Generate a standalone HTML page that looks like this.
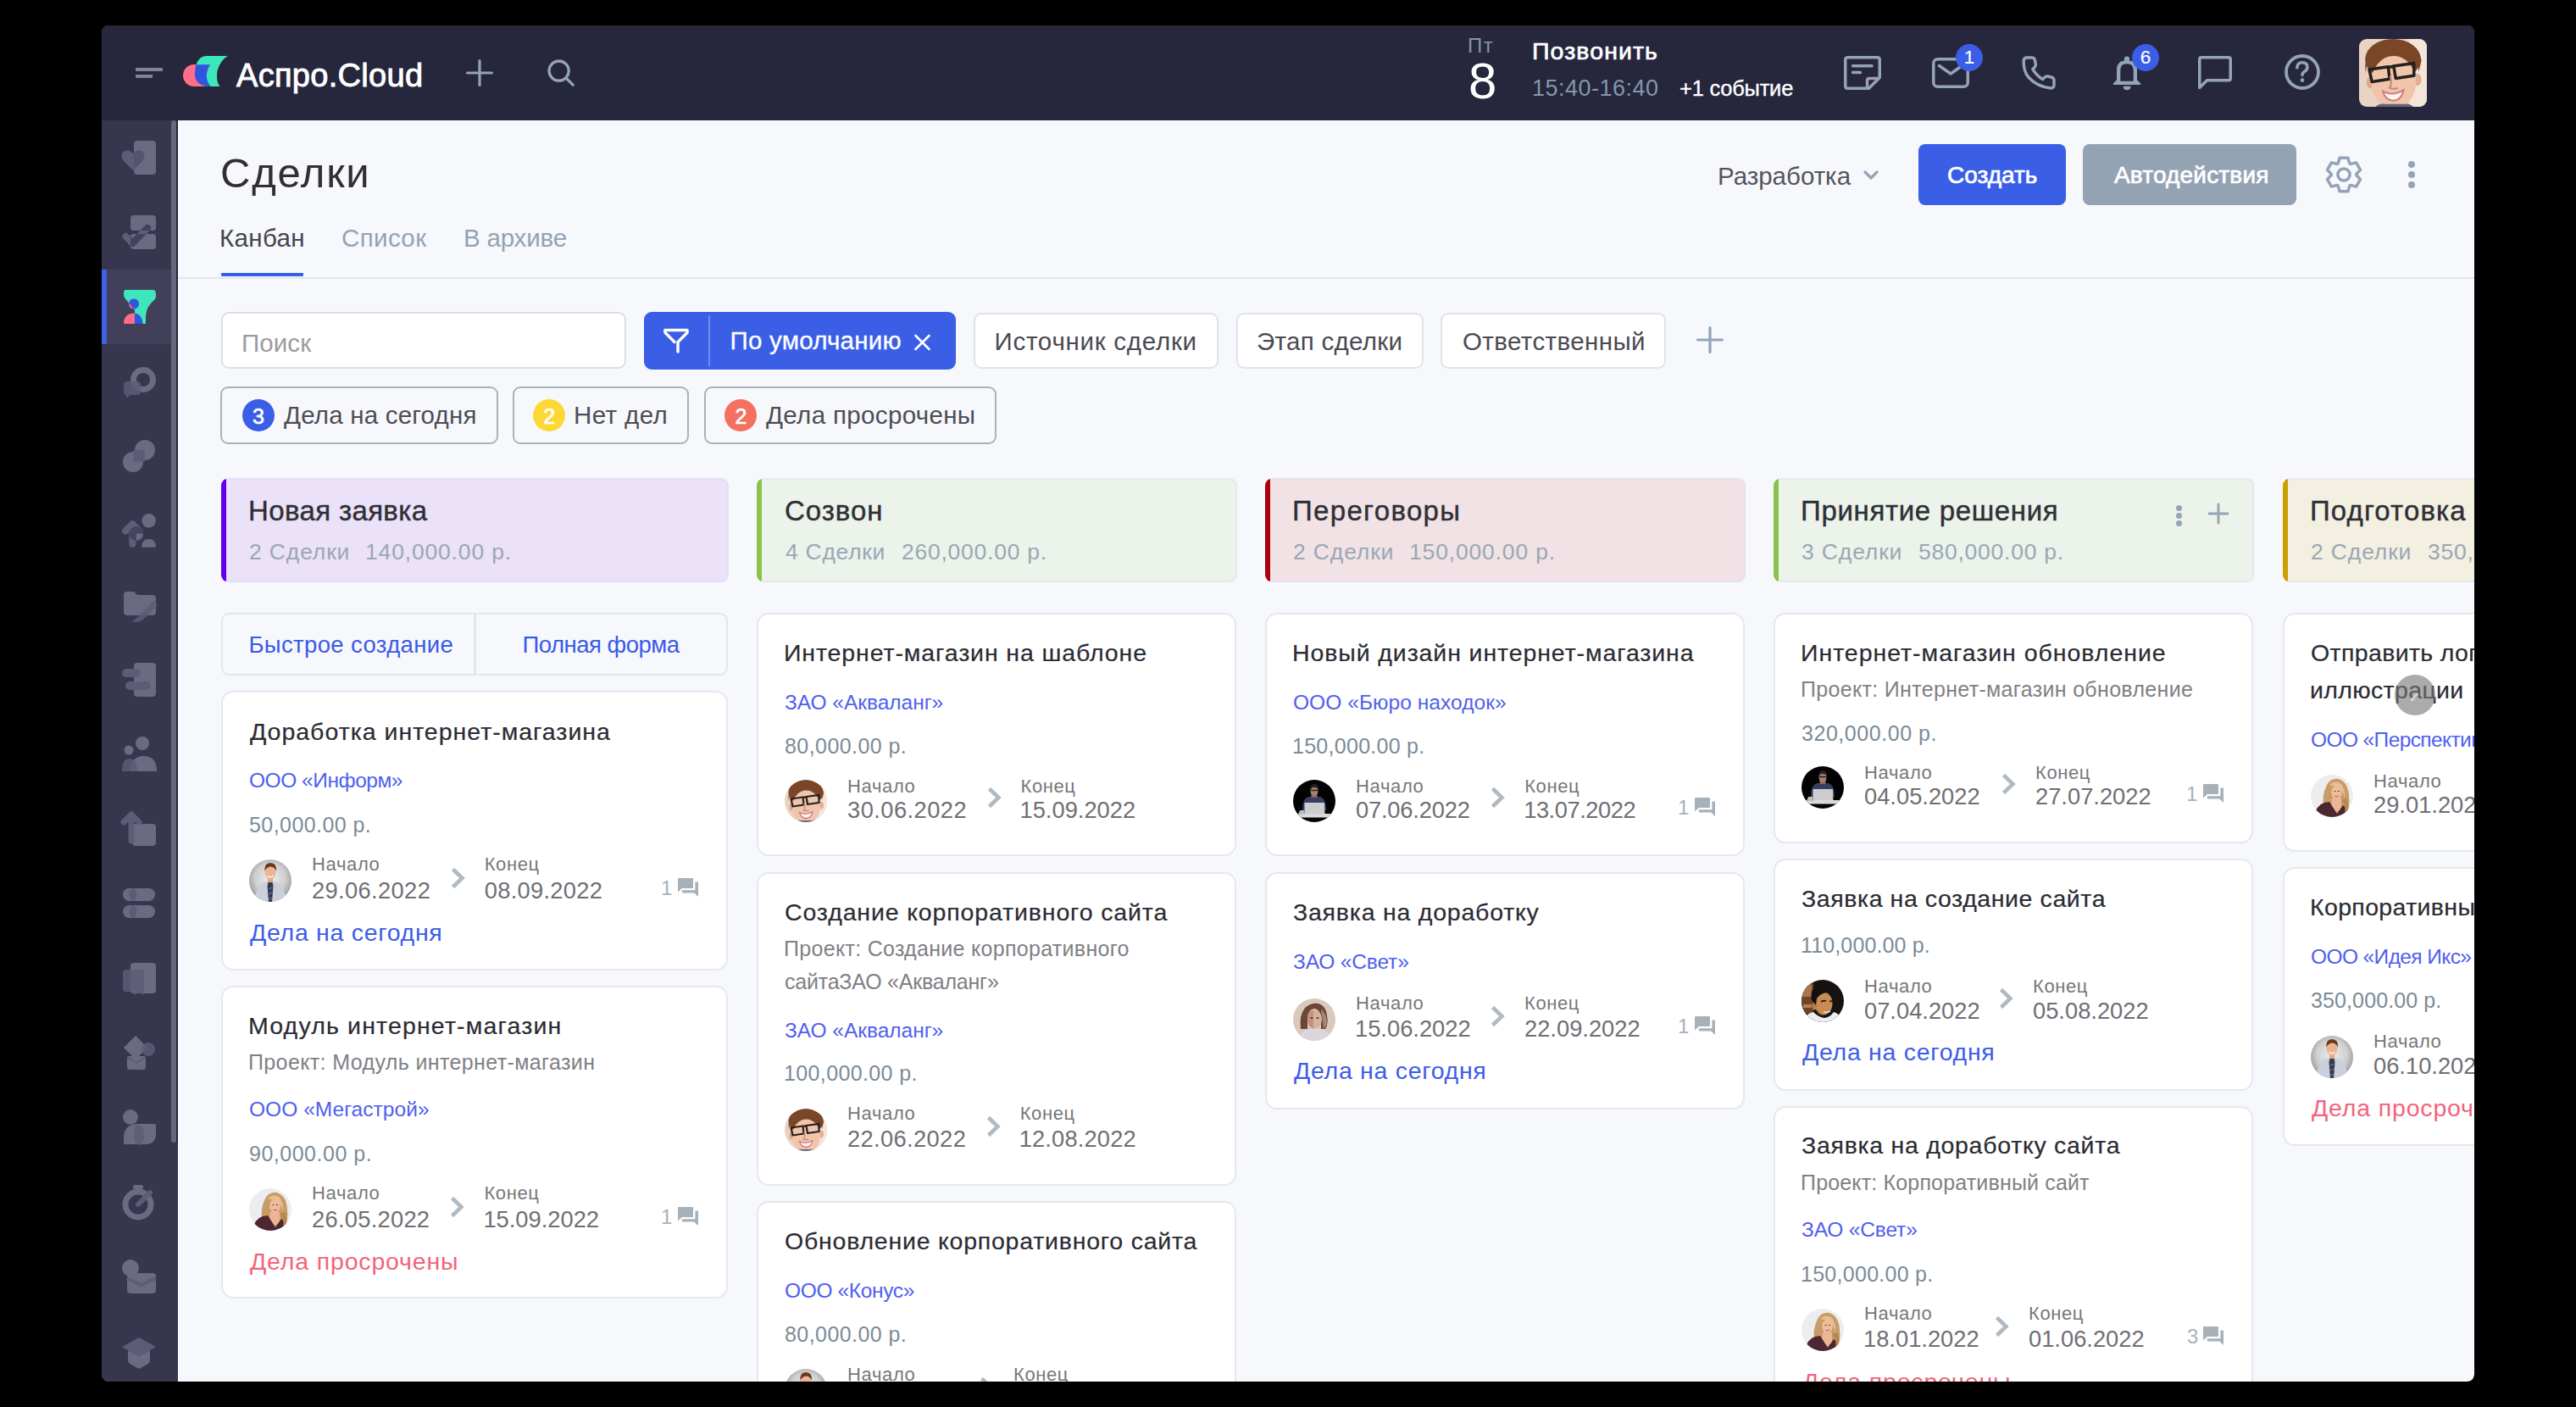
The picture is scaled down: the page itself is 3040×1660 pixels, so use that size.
<!DOCTYPE html>
<html lang="ru"><head><meta charset="utf-8"><title>Сделки</title><style>
html,body{margin:0;padding:0;background:#000;width:3040px;height:1660px;overflow:hidden}
body{position:relative;font-family:"Liberation Sans",sans-serif}
.t{position:absolute;white-space:nowrap;line-height:1;font-family:"Liberation Sans",sans-serif}
svg{display:block}
</style></head><body>
<div id="win" style="position:absolute;left:120px;top:30px;width:2800px;height:1600px;overflow:hidden;border-radius:8px;background:#f7f8fc"></div>
<div style="position:absolute;left:120px;top:30px;width:2800px;height:112px;background:#26263d;border-radius:8px 8px 0 0;"></div>
<div style="position:absolute;left:120px;top:142px;width:90px;height:1488px;background:#37364f;border-radius:0 0 0 8px;"></div>
<div style="position:absolute;left:208px;top:142px;width:2px;height:1206px;background:#26263d;"></div>
<div style="position:absolute;left:202px;top:142px;width:6px;height:1206px;background:#67667d;border-radius:3px;"></div>
<div style="position:absolute;left:120px;top:318px;width:82px;height:88px;background:#413f59;"></div>
<div style="position:absolute;left:120px;top:318px;width:6px;height:88px;background:#3f63e8;"></div>
<div style="position:absolute;left:210px;top:142px;width:1px;height:1488px;background:#ffffff;"></div>
<svg style="position:absolute;left:142px;top:164px" width="44" height="44" viewBox="0 0 44 44"><rect x="16" y="2" width="26" height="40" rx="4" fill="#6b6a83"/><path d="M15 37 L4 26 C0 22 1 14 7.5 13.5 C11 13.2 13.5 15 15 17.5 C16.5 15 19 13.2 22.5 13.5 C29 14 30 22 26 26 Z" fill="#5d5c76"/><path d="M16 17 V36 L26 26 C30 22 29 14 22.5 13.5 C19 13.2 17 15 16 17 Z" fill="#55546e"/></svg>
<svg style="position:absolute;left:142px;top:252px" width="44" height="44" viewBox="0 0 44 44"><defs><clipPath id="c2"><rect x="12" y="2" width="30" height="18" rx="3"/><rect x="12" y="24" width="30" height="18" rx="3"/></clipPath></defs><rect x="12" y="2" width="30" height="18" rx="3.5" fill="#6b6a83"/><rect x="12" y="24" width="30" height="18" rx="3.5" fill="#6b6a83"/><path d="M6.5 27 L14.5 35 L32 17" fill="none" stroke="#5f5e78" stroke-width="8" stroke-linecap="round" stroke-linejoin="round"/><g clip-path="url(#c2)"><path d="M6.5 27 L14.5 35 L32 17" fill="none" stroke="#43425c" stroke-width="8" stroke-linecap="round" stroke-linejoin="round"/></g></svg>
<svg style="position:absolute;left:142px;top:340px" width="44" height="44" viewBox="0 0 44 44"><defs><clipPath id="fcl"><path d="M6 2 H38 Q42 2 42 6 V10 Q42 12 40 14 Q30 22 30 34 V42 H17 L17 26 L5.5 12 Q4 10 4 8 V6 Q4 2 6 2 Z"/></clipPath></defs><path d="M6 2 H38 Q42 2 42 6 V10 Q42 12 40 14 Q30 22 30 34 V42 H17 L17 26 L5.5 12 Q4 10 4 8 V6 Q4 2 6 2 Z" fill="#3de6bc"/><circle cx="16" cy="18.5" r="6" fill="#ff6d88"/><path d="M4 42 Q4 29.5 17 29.5 Q26 31 26.5 42 Z" fill="#ff6d88"/><g clip-path="url(#fcl)"><circle cx="16" cy="18.5" r="6" fill="#2f56dd"/><path d="M4 42 Q4 29.5 17 29.5 Q26 31 26.5 42 Z" fill="#2f56dd"/></g></svg>
<svg style="position:absolute;left:142px;top:428px" width="44" height="44" viewBox="0 0 44 44"><circle cx="27" cy="20" r="11.5" fill="none" stroke="#6b6a83" stroke-width="7"/><path d="M4 26 Q4 22 8 22 H20 Q24 22 24 26 V34 Q24 38 20 38 H12 L7 42 V38 Q4 37 4 34 Z" fill="#5d5c76" opacity="0.85"/></svg>
<svg style="position:absolute;left:142px;top:516px" width="44" height="44" viewBox="0 0 44 44"><circle cx="29" cy="15" r="12" fill="#6b6a83"/><circle cx="15" cy="29" r="12" fill="#6b6a83"/><rect x="15" y="15" width="14" height="14" fill="#5d5c76"/></svg>
<svg style="position:absolute;left:142px;top:604px" width="44" height="44" viewBox="0 0 44 44"><circle cx="33.6" cy="10.3" r="8.3" fill="#6b6a83"/><path d="M25.2 41.8 Q25.2 32 33.6 32 Q42 32 42 41.8 Z" fill="#6b6a83"/><path d="M6 22.5 L14.3 14.3 L22.6 22.5 M14.3 25 V37.8" fill="none" stroke="#5f5e78" stroke-width="8" stroke-linecap="round" stroke-linejoin="round"/><circle cx="18.7" cy="25.5" r="8.4" fill="#43425c" opacity="0.9"/><path d="M18.7 25.5 H27.1 A8.4 8.4 0 0 1 18.7 33.9 Z" fill="#6b6a83"/></svg>
<svg style="position:absolute;left:142px;top:692px" width="44" height="44" viewBox="0 0 44 44"><path d="M4 10 Q4 6 8 6 H16 L20 10 H38 Q42 10 42 14 V30 Q42 34 38 34 H8 Q4 34 4 30 Z" fill="#6b6a83"/><path d="M14 42 L40 16 L44 22 L28 38 Q24 42 18 42 Z" fill="#5d5c76" opacity="0.85"/></svg>
<svg style="position:absolute;left:142px;top:780px" width="44" height="44" viewBox="0 0 44 44"><rect x="16" y="2" width="26" height="40" rx="4" fill="#6b6a83"/><rect x="2" y="9" width="22" height="10" rx="5" fill="#5d5c76"/><rect x="6" y="24" width="30" height="10" rx="5" fill="#5d5c76"/></svg>
<svg style="position:absolute;left:142px;top:868px" width="44" height="44" viewBox="0 0 44 44"><circle cx="26" cy="9" r="8" fill="#6b6a83"/><circle cx="10" cy="17" r="5.5" fill="#6b6a83"/><path d="M12 42 Q12 24 28 24 Q43 24 43 42 Z" fill="#6b6a83"/><path d="M2 42 Q2 27 11 27 Q20 27 20 42 Z" fill="#5d5c76" opacity="0.85"/></svg>
<svg style="position:absolute;left:142px;top:956px" width="44" height="44" viewBox="0 0 44 44"><rect x="14" y="16" width="28" height="26" rx="4" fill="#6b6a83"/><path d="M4 14 L13 5 L22 14 M13 7 V36" fill="none" stroke="#5d5c76" stroke-width="7" stroke-linecap="round" stroke-linejoin="round"/></svg>
<svg style="position:absolute;left:142px;top:1044px" width="44" height="44" viewBox="0 0 44 44"><rect x="3" y="4" width="38" height="15" rx="7.5" fill="#6b6a83"/><rect x="3" y="24" width="38" height="15" rx="7.5" fill="#6b6a83"/><ellipse cx="15" cy="11.5" rx="4.5" ry="7.5" fill="#5d5c76"/><ellipse cx="15" cy="31.5" rx="4.5" ry="7.5" fill="#5d5c76"/></svg>
<svg style="position:absolute;left:142px;top:1132px" width="44" height="44" viewBox="0 0 44 44"><rect x="12" y="4" width="30" height="36" rx="4" fill="#6b6a83"/><path d="M3 16 Q3 12 7 12 H28 V42 Q22 38 16 42 V38 H7 Q3 38 3 34 Z" fill="#5d5c76" opacity="0.85"/></svg>
<svg style="position:absolute;left:142px;top:1220px" width="44" height="44" viewBox="0 0 44 44"><path d="M18 2 L32 16 L18 30 L4 16 Z" fill="#6b6a83"/><circle cx="33" cy="18" r="8" fill="#5d5c76" opacity="0.85"/><rect x="8" y="26" width="22" height="16" rx="3" fill="#6b6a83"/><path d="M8 27 L19 34 L30 27" fill="none" stroke="#5d5c76" stroke-width="2"/></svg>
<svg style="position:absolute;left:142px;top:1308px" width="44" height="44" viewBox="0 0 44 44"><circle cx="12" cy="10" r="9" fill="#6b6a83"/><path d="M22 18 H40 Q42 18 42 20 V30 Q42 42 30 42 H4 V34 Q4 18 22 18 Z" fill="#6b6a83"/><ellipse cx="22" cy="31" rx="6" ry="12" fill="#5d5c76" opacity="0.85"/></svg>
<svg style="position:absolute;left:142px;top:1396px" width="44" height="44" viewBox="0 0 44 44"><circle cx="21" cy="25" r="15" fill="none" stroke="#6b6a83" stroke-width="7"/><rect x="15" y="2" width="12" height="5" rx="2" fill="#6b6a83"/><path d="M21 25 L35 11" stroke="#5d5c76" stroke-width="6" stroke-linecap="round"/></svg>
<svg style="position:absolute;left:142px;top:1484px" width="44" height="44" viewBox="0 0 44 44"><circle cx="12" cy="12" r="10" fill="#6b6a83"/><rect x="8" y="18" width="34" height="24" rx="4" fill="#6b6a83"/><path d="M8 24 L25 32 L42 24" fill="none" stroke="#5d5c76" stroke-width="4"/></svg>
<svg style="position:absolute;left:142px;top:1572px" width="44" height="44" viewBox="0 0 44 44"><path d="M22 6 L42 17 L22 28 L2 17 Z" fill="#5d5c76"/><path d="M9 21 V33 Q9 36 13 38 L20 42 Q22 43 24 42 L31 38 Q35 36 35 33 V21 L22 28 Z" fill="#6b6a83"/></svg>
<div style="position:absolute;left:160px;top:80px;width:32px;height:4px;background:#7f8399;"></div>
<div style="position:absolute;left:160px;top:88px;width:20px;height:4px;background:#7f8399;"></div>
<svg style="position:absolute;left:210px;top:60px" width="70" height="50" viewBox="0 0 70 50"><circle cx="19" cy="29" r="13" fill="#ff6d88"/><rect x="19" y="16" width="14" height="26" fill="#ff6d88"/><path d="M21.5 16 L38 16 C34 22 33 34 38.5 42 L33 42 C25 40 20 35 20 28.5 C20 23 20.6 19 21.5 16 Z" fill="#2f56dd"/><path d="M21.6 16.2 C23.5 10 28 6 34 6 L58.5 6 C51.5 11 46.2 19 46 29 C46 35 47 39 49.5 42 L38.5 42 C34 36.5 33 30 34.2 25.5 C35.2 21.5 36.3 18.5 38 16.2 Z" fill="#3de6bc"/></svg>
<div class="t" id="t0" style="left:279.0px;top:69.7px;font-size:38px;color:#ffffff;letter-spacing:0.298px;-webkit-text-stroke:0.9px #ffffff;">Аспро.Cloud</div>
<svg style="position:absolute;left:546px;top:66px" width="40" height="40" viewBox="0 0 40 40"><path d="M20 5.5 V34.5 M5.5 20 H34.5" stroke="#94a3b8" stroke-width="3.2" stroke-linecap="round"/></svg>
<svg style="position:absolute;left:642px;top:66px" width="40" height="40" viewBox="0 0 40 40"><circle cx="17.6" cy="17.6" r="11.6" fill="none" stroke="#94a3b8" stroke-width="3.3"/><path d="M26.3 26.3 L34.2 34.2" stroke="#94a3b8" stroke-width="3.3" stroke-linecap="round"/></svg>
<div class="t" id="t1" style="left:1732.0px;top:41.5px;font-size:24px;color:#8596ab;letter-spacing:1.430px;">Пт</div>
<div class="t" id="t2" style="left:1733.0px;top:66.0px;font-size:60px;color:#ffffff;">8</div>
<div class="t" id="t3" style="left:1808.0px;top:46.1px;font-size:28.5px;color:#ffffff;letter-spacing:1.079px;-webkit-text-stroke:0.7px #ffffff;">Позвонить</div>
<div class="t" id="t4" style="left:1808.0px;top:90.7px;font-size:27px;color:#8596ab;letter-spacing:0.477px;">15:40-16:40</div>
<div class="t" id="t5" style="left:1982.0px;top:92.4px;font-size:25.5px;color:#ffffff;letter-spacing:-0.234px;-webkit-text-stroke:0.35px #ffffff;">+1 событие</div>
<svg style="position:absolute;left:2170px;top:60px" width="56" height="52" viewBox="0 0 56 52"><path d="M10.5 7.75 H45.5 Q48.25 7.75 48.25 10.5 V31.5 L35.5 44.25 H10.5 Q7.75 44.25 7.75 41.5 V10.5 Q7.75 7.75 10.5 7.75 Z" fill="none" stroke="#94a3b8" stroke-width="3.5" stroke-linejoin="round"/><path d="M48 32.5 H36 Q33.5 32.5 33.5 35 V44" fill="none" stroke="#94a3b8" stroke-width="3.5" stroke-linejoin="round"/><path d="M16.5 17.8 H39 M16.5 25.5 H25.5" stroke="#94a3b8" stroke-width="3.5" stroke-linecap="round"/></svg>
<svg style="position:absolute;left:2274px;top:60px" width="56" height="52" viewBox="0 0 56 52"><rect x="7.75" y="9.75" width="40.5" height="32.5" rx="5" fill="none" stroke="#94a3b8" stroke-width="3.5"/><path d="M14.5 17.5 L28 27 L41.5 17.5" fill="none" stroke="#94a3b8" stroke-width="3.5" stroke-linecap="round" stroke-linejoin="round"/></svg>
<svg style="position:absolute;left:2380px;top:60px" width="52" height="52" viewBox="0 0 52 52"><path d="M8.1 12.2 Q8.1 8 12.2 8 H18 Q20.6 8 21.3 10.6 L22.3 15.3 Q22.7 18 20.6 19.9 L18.9 21.6 Q23.5 29.3 30.6 33.6 L32.5 31.6 Q34.2 29.6 37.2 30.1 L41.6 31.3 Q44 32.2 44 35 V40.2 Q44 44.1 40 43.9 Q24.5 42.5 14.2 31.5 Q8.1 24.5 8.1 12.2 Z" fill="none" stroke="#94a3b8" stroke-width="3.5" stroke-linejoin="round"/></svg>
<svg style="position:absolute;left:2484px;top:60px" width="52" height="52" viewBox="0 0 52 52"><path fill-rule="evenodd" d="M9.8 40 V38.6 L14 34.2 V22.5 Q14 11.3 26 11.3 Q38 11.3 38 22.5 V34.2 L42.2 38.6 V40 Z M18.3 35.8 V22.5 Q18.3 15.2 26 15.2 Q33.7 15.2 33.7 22.5 V35.8 Z" fill="#94a3b8"/><circle cx="26" cy="9.6" r="3.2" fill="#94a3b8"/><path d="M21.7 41.8 H30.5 Q30.5 46.3 26.1 46.3 Q21.7 46.3 21.7 41.8 Z" fill="#94a3b8"/></svg>
<svg style="position:absolute;left:2588px;top:60px" width="52" height="52" viewBox="0 0 52 52"><path d="M10 7.75 H42 Q44.25 7.75 44.25 10 V32.5 Q44.25 34.75 42 34.75 H16.5 L7.75 43.5 V10 Q7.75 7.75 10 7.75 Z" fill="none" stroke="#94a3b8" stroke-width="3.5" stroke-linejoin="round"/></svg>
<svg style="position:absolute;left:2692px;top:60px" width="52" height="52" viewBox="0 0 52 52"><circle cx="25" cy="25" r="19" fill="none" stroke="#94a3b8" stroke-width="3.8"/><path d="M18.8 19.8 Q19.2 13.8 25 13.8 Q30.9 13.8 30.9 19.2 Q30.9 22.6 27.6 24.5 Q25 26 25 28.6" fill="none" stroke="#94a3b8" stroke-width="3.6" stroke-linecap="round"/><circle cx="25" cy="34.6" r="2.3" fill="#94a3b8"/></svg>
<div style="position:absolute;left:2308px;top:52px;width:32px;height:32px;background:#3a5fe6;border-radius:50%;"></div>
<div class="t" id="t6" style="left:2316.0px;top:56.9px;font-size:22.5px;color:#ffffff;-webkit-text-stroke:0.2px #ffffff;width:16px;text-align:center;">1</div>
<div style="position:absolute;left:2516px;top:52px;width:32px;height:32px;background:#3a5fe6;border-radius:50%;"></div>
<div class="t" id="t7" style="left:2524.0px;top:56.9px;font-size:22.5px;color:#ffffff;-webkit-text-stroke:0.2px #ffffff;width:16px;text-align:center;">6</div>
<div style="position:absolute;left:2784px;top:46px;width:80px;height:80px;border-radius:9px;overflow:hidden"><svg width="80" height="80" viewBox="0 0 50 50" preserveAspectRatio="none"><rect width="50" height="50" fill="#e9d3c4"/><rect x="37" y="0" width="13" height="50" fill="#f3e6d9"/><ellipse cx="25" cy="15" rx="20.5" ry="15" fill="#7a4628"/><ellipse cx="8.5" cy="32" rx="3" ry="4.5" fill="#dfa68c"/><ellipse cx="43" cy="30" rx="3" ry="4.5" fill="#e3ad94"/><ellipse cx="25.5" cy="32" rx="16.5" ry="19.5" fill="#f0c5ac"/><path d="M5 26 Q5 12 16 11 Q28 9.5 37 12 Q43 14 44 24 L46 16 Q44 2 26 2 Q6 2 4.5 20 Z" fill="#7a4628"/><path d="M7.5 22.5 L21.5 20.5 L22.5 29.5 L9.5 31.5 Z" fill="none" stroke="#26201e" stroke-width="2.2" stroke-linejoin="round"/><path d="M25.5 20 L40.5 17.8 L40.5 27 L27 29 Z" fill="none" stroke="#26201e" stroke-width="2.2" stroke-linejoin="round"/><path d="M21.5 21 L25.5 20.2" stroke="#26201e" stroke-width="2.2"/><path d="M23 27 Q24.5 34 22.5 36 Q25.5 37.5 28.5 36" fill="none" stroke="#c38a74" stroke-width="1.3"/><path d="M17.5 38.5 Q25 42.5 32.8 37.6 Q31.5 45 25.5 45.5 Q19.5 45.5 17.5 38.5 Z" fill="#fbf4f0" stroke="#d27c82" stroke-width="1.3"/><path d="M12 50 Q15 47 19 48 L33 48 Q37 47 40 50 Z" fill="#5f6678"/></svg></div>
<div class="t" id="t8" style="left:260.0px;top:180.3px;font-size:49px;color:#2f2f35;letter-spacing:1.748px;">Сделки</div>
<div class="t" id="t9" style="left:259.0px;top:265.6px;font-size:29.5px;color:#45454d;letter-spacing:0.351px;">Канбан</div>
<div class="t" id="t10" style="left:403.0px;top:265.6px;font-size:29.5px;color:#93a3b5;letter-spacing:0.382px;">Список</div>
<div class="t" id="t11" style="left:547.0px;top:265.6px;font-size:29.5px;color:#93a3b5;letter-spacing:-0.183px;">В архиве</div>
<div style="position:absolute;left:261px;top:322px;width:97px;height:4px;background:#3a5fe6;border-radius:1px;"></div>
<div style="position:absolute;left:210px;top:327px;width:2710px;height:2px;background:#e4e7ef;"></div>
<div class="t" id="t12" style="left:2027.0px;top:193.2px;font-size:29.5px;color:#55555c;letter-spacing:-0.020px;">Разработка</div>
<svg style="position:absolute;left:2196px;top:196px" width="24" height="22" viewBox="0 0 24 22"><path d="M5 7 L12 14 L19 7" fill="none" stroke="#94a3b8" stroke-width="3.2" stroke-linecap="round" stroke-linejoin="round"/></svg>
<div style="position:absolute;left:2264px;top:170px;width:174px;height:72px;background:#3a5fe6;border-radius:8px;"></div>
<div class="t" id="t13" style="left:2298.0px;top:192.8px;font-size:28px;color:#ffffff;letter-spacing:-0.008px;-webkit-text-stroke:0.7px #ffffff;">Создать</div>
<div style="position:absolute;left:2458px;top:170px;width:252px;height:72px;background:#94a3b4;border-radius:8px;"></div>
<div class="t" id="t14" style="left:2495.0px;top:192.8px;font-size:28px;color:#ffffff;letter-spacing:0.176px;-webkit-text-stroke:0.7px #ffffff;">Автодействия</div>
<svg style="position:absolute;left:2740px;top:180px" width="52" height="52" viewBox="0 0 52 52"><path d="M32.66 12.34 L30.91 6.30 L21.09 6.30 L19.34 12.34 L18.70 13.36 L17.50 13.40 L11.40 11.90 L6.49 20.40 L10.84 24.94 L11.40 26.00 L10.84 27.06 L6.49 31.60 L11.40 40.10 L17.50 38.60 L18.70 38.64 L19.34 39.66 L21.09 45.70 L30.91 45.70 L32.66 39.66 L33.30 38.64 L34.50 38.60 L40.60 40.10 L45.51 31.60 L41.16 27.06 L40.60 26.00 L41.16 24.94 L45.51 20.40 L40.60 11.90 L34.50 13.40 L33.30 13.36 Z" fill="none" stroke="#94a3b8" stroke-width="3.5" stroke-linejoin="round"/><circle cx="26" cy="26" r="7.1" fill="none" stroke="#94a3b8" stroke-width="3.5"/></svg>
<div style="position:absolute;left:2842px;top:190px;width:8px;height:8px;background:#94a3b8;border-radius:50%;"></div>
<div style="position:absolute;left:2842px;top:202px;width:8px;height:8px;background:#94a3b8;border-radius:50%;"></div>
<div style="position:absolute;left:2842px;top:214px;width:8px;height:8px;background:#94a3b8;border-radius:50%;"></div>
<div style="position:absolute;left:261px;top:368px;width:478px;height:67px;background:#fff;border:2px solid #d9dfe7;border-radius:9px;box-sizing:border-box;"></div>
<div class="t" id="t15" style="left:285.0px;top:390.2px;font-size:29.5px;color:#9b9ba0;letter-spacing:0.079px;">Поиск</div>
<div style="position:absolute;left:760px;top:368px;width:368px;height:68px;background:#3a5fe6;border-radius:9px;"></div>
<div style="position:absolute;left:836px;top:372px;width:2px;height:60px;background:#6d8cf0;"></div>
<svg style="position:absolute;left:778px;top:382px" width="40" height="40" viewBox="0 0 40 40"><path d="M7 7.5 H33 V10.5 L22 21.5 V33" fill="none" stroke="#fff" stroke-width="3.4" stroke-linecap="round" stroke-linejoin="round"/><path d="M7 7.5 V10.5 L18 21.5" fill="none" stroke="#fff" stroke-width="3.4" stroke-linecap="round" stroke-linejoin="round"/></svg>
<div class="t" id="t16" style="left:861.5px;top:387.4px;font-size:29.5px;color:#ffffff;letter-spacing:0.233px;-webkit-text-stroke:0.3px #ffffff;">По умолчанию</div>
<svg style="position:absolute;left:1076px;top:392px" width="26" height="24" viewBox="0 0 26 24"><path d="M4.5 4 L20.5 20 M20.5 4 L4.5 20" stroke="#fff" stroke-width="2.6" stroke-linecap="round"/></svg>
<div style="position:absolute;left:1148.5px;top:368.5px;width:289.0px;height:66px;background:#fff;border:2px solid #dfe3eb;border-radius:9px;box-sizing:border-box;"></div>
<div class="t" id="t17" style="left:1173.5px;top:387.5px;font-size:29.5px;color:#4a4a52;letter-spacing:0.746px;">Источник сделки</div>
<div style="position:absolute;left:1459px;top:368.5px;width:220.5px;height:66px;background:#fff;border:2px solid #dfe3eb;border-radius:9px;box-sizing:border-box;"></div>
<div class="t" id="t18" style="left:1483.0px;top:387.5px;font-size:29.5px;color:#4a4a52;letter-spacing:0.311px;">Этап сделки</div>
<div style="position:absolute;left:1700px;top:368.5px;width:266px;height:66px;background:#fff;border:2px solid #dfe3eb;border-radius:9px;box-sizing:border-box;"></div>
<div class="t" id="t19" style="left:1726.0px;top:387.5px;font-size:29.5px;color:#4a4a52;letter-spacing:0.407px;">Ответственный</div>
<svg style="position:absolute;left:1998px;top:381px" width="40" height="40" viewBox="0 0 40 40"><path d="M20 5.5 V34.5 M5.5 20 H34.5" stroke="#94a3b8" stroke-width="3.2" stroke-linecap="round"/></svg>
<div style="position:absolute;left:260px;top:456px;width:328px;height:68px;border:2px solid #a7b3bc;border-radius:9px;box-sizing:border-box;"></div>
<div style="position:absolute;left:286px;top:471px;width:38px;height:38px;background:#3a5fe6;border-radius:50%;"></div>
<div class="t" id="t20" style="left:296.0px;top:479.0px;font-size:25px;color:#ffffff;-webkit-text-stroke:0.7px #ffffff;width:18px;text-align:center;">3</div>
<div class="t" id="t21" style="left:335.0px;top:475.0px;font-size:29.5px;color:#4d4d55;letter-spacing:0.199px;">Дела на сегодня</div>
<div style="position:absolute;left:604.5px;top:456px;width:208.5px;height:68px;border:2px solid #a7b3bc;border-radius:9px;box-sizing:border-box;"></div>
<div style="position:absolute;left:629.3px;top:471px;width:38px;height:38px;background:#fdd835;border-radius:50%;"></div>
<div class="t" id="t22" style="left:639.3px;top:479.0px;font-size:25px;color:#ffffff;-webkit-text-stroke:0.7px #ffffff;width:18px;text-align:center;">2</div>
<div class="t" id="t23" style="left:677.0px;top:475.0px;font-size:29.5px;color:#4d4d55;letter-spacing:0.410px;">Нет дел</div>
<div style="position:absolute;left:830.7px;top:456px;width:345.29999999999995px;height:68px;border:2px solid #a7b3bc;border-radius:9px;box-sizing:border-box;"></div>
<div style="position:absolute;left:855.4px;top:471px;width:38px;height:38px;background:#f4705f;border-radius:50%;"></div>
<div class="t" id="t24" style="left:865.4px;top:479.0px;font-size:25px;color:#ffffff;-webkit-text-stroke:0.7px #ffffff;width:18px;text-align:center;">2</div>
<div class="t" id="t25" style="left:904.0px;top:475.0px;font-size:29.5px;color:#4d4d55;letter-spacing:0.347px;">Дела просрочены</div>
<div style="position:absolute;left:261px;top:564px;width:599px;height:123px;background:#ebe1f9;border-radius:9px;box-shadow:inset 0 0 0 2px rgba(220,224,236,0.55);overflow:hidden"><div style="position:absolute;left:0;top:0;width:6px;height:123px;background:#6200ea;border-radius:3px"></div></div>
<div class="t" id="t26" style="left:293.0px;top:586.3px;font-size:33px;color:#2f2f35;letter-spacing:0.364px;-webkit-text-stroke:0.4px #2f2f35;">Новая заявка</div>
<div class="t" id="t27" style="left:294.0px;top:638.0px;font-size:26.5px;color:#9aa7b4;letter-spacing:0.857px;">2 Сделки</div>
<div class="t" id="t28" style="left:431.0px;top:638.0px;font-size:26.5px;color:#9aa7b4;letter-spacing:0.833px;">140,000.00 р.</div>
<div style="position:absolute;left:893px;top:564px;width:567px;height:123px;background:#ebf3ea;border-radius:9px;box-shadow:inset 0 0 0 2px rgba(220,224,236,0.55);overflow:hidden"><div style="position:absolute;left:0;top:0;width:6px;height:123px;background:#8bc34a;border-radius:3px"></div></div>
<div class="t" id="t29" style="left:926.0px;top:586.3px;font-size:33px;color:#2f2f35;letter-spacing:0.960px;-webkit-text-stroke:0.4px #2f2f35;">Созвон</div>
<div class="t" id="t30" style="left:927.0px;top:638.0px;font-size:26.5px;color:#9aa7b4;letter-spacing:0.714px;">4 Сделки</div>
<div class="t" id="t31" style="left:1064.0px;top:638.0px;font-size:26.5px;color:#9aa7b4;letter-spacing:0.750px;">260,000.00 р.</div>
<div style="position:absolute;left:1493px;top:564px;width:567px;height:123px;background:#f1e2e5;border-radius:9px;box-shadow:inset 0 0 0 2px rgba(220,224,236,0.55);overflow:hidden"><div style="position:absolute;left:0;top:0;width:6px;height:123px;background:#a8000e;border-radius:3px"></div></div>
<div class="t" id="t32" style="left:1525.0px;top:586.3px;font-size:33px;color:#2f2f35;letter-spacing:1.333px;-webkit-text-stroke:0.4px #2f2f35;">Переговоры</div>
<div class="t" id="t33" style="left:1526.0px;top:638.0px;font-size:26.5px;color:#9aa7b4;letter-spacing:0.857px;">2 Сделки</div>
<div class="t" id="t34" style="left:1663.0px;top:638.0px;font-size:26.5px;color:#9aa7b4;letter-spacing:0.833px;">150,000.00 р.</div>
<div style="position:absolute;left:2093px;top:564px;width:567px;height:123px;background:#ebf3ea;border-radius:9px;box-shadow:inset 0 0 0 2px rgba(220,224,236,0.55);overflow:hidden"><div style="position:absolute;left:0;top:0;width:6px;height:123px;background:#8bc34a;border-radius:3px"></div></div>
<div class="t" id="t35" style="left:2125.0px;top:586.3px;font-size:33px;color:#2f2f35;letter-spacing:0.667px;-webkit-text-stroke:0.4px #2f2f35;">Принятие решения</div>
<div class="t" id="t36" style="left:2126.0px;top:638.0px;font-size:26.5px;color:#9aa7b4;letter-spacing:0.857px;">3 Сделки</div>
<div class="t" id="t37" style="left:2264.0px;top:638.0px;font-size:26.5px;color:#9aa7b4;letter-spacing:0.750px;">580,000.00 р.</div>
<div style="position:absolute;left:2694px;top:564px;width:567px;height:123px;background:#f3f0e2;border-radius:9px;box-shadow:inset 0 0 0 2px rgba(220,224,236,0.55);overflow:hidden"><div style="position:absolute;left:0;top:0;width:6px;height:123px;background:#c9a000;border-radius:3px"></div></div>
<div class="t" id="t38" style="left:2726.0px;top:586.3px;font-size:33px;color:#2f2f35;letter-spacing:1.111px;-webkit-text-stroke:0.4px #2f2f35;">Подготовка</div>
<div class="t" id="t39" style="left:2727.0px;top:638.0px;font-size:26.5px;color:#9aa7b4;letter-spacing:0.857px;">2 Сделки</div>
<div class="t" id="t40" style="left:2865.0px;top:638.0px;font-size:26.5px;color:#9aa7b4;letter-spacing:0.750px;">350,000.00 р.</div>
<div style="position:absolute;left:2568px;top:595.5px;width:7px;height:7px;background:#94a3b8;border-radius:50%;"></div>
<div style="position:absolute;left:2568px;top:604.5px;width:7px;height:7px;background:#94a3b8;border-radius:50%;"></div>
<div style="position:absolute;left:2568px;top:613.5px;width:7px;height:7px;background:#94a3b8;border-radius:50%;"></div>
<svg style="position:absolute;left:2603px;top:591px" width="30" height="30" viewBox="0 0 30 30"><path d="M15 4 V26 M4 15 H26" stroke="#94a3b8" stroke-width="2.8" stroke-linecap="round"/></svg>
<div style="position:absolute;left:261px;top:723px;width:598px;height:74px;border:2px solid #e3e6ef;border-radius:9px;box-sizing:border-box;"></div>
<div style="position:absolute;left:559px;top:723px;width:3px;height:74px;background:#e3e6ef;"></div>
<div class="t" id="t41" style="left:293.4px;top:746.9px;font-size:27.5px;color:#3a5ae8;letter-spacing:0.367px;">Быстрое создание</div>
<div class="t" id="t42" style="left:616.4px;top:746.9px;font-size:27.5px;color:#3a5ae8;letter-spacing:-0.478px;">Полная форма</div>
<div style="position:absolute;left:261px;top:815px;width:598px;height:330px;background:#fff;border:2px solid #e5e8f0;border-radius:14px;box-sizing:border-box"></div>
<div class="t" id="t43" style="left:295.0px;top:848.5px;font-size:28.5px;color:#2b2b33;letter-spacing:0.986px;-webkit-text-stroke:0.2px #2b2b33;">Доработка интернет-магазина</div>
<div class="t" id="t44" style="left:294.0px;top:909.1px;font-size:24.5px;color:#4f60ee;letter-spacing:-0.470px;">ООО «Информ»</div>
<div class="t" id="t45" style="left:294.0px;top:961.2px;font-size:25px;color:#7b8b97;letter-spacing:0.431px;">50,000.00 р.</div>
<div style="position:absolute;left:294px;top:1014px;width:50px;height:50px;border-radius:50%;overflow:hidden"><svg width="50" height="50" viewBox="0 0 50 50"><defs><radialGradient id="gt" cx="50%" cy="45%" r="60%"><stop offset="0" stop-color="#efefef"/><stop offset="0.6" stop-color="#cfcfcf"/><stop offset="1" stop-color="#8e8e8e"/></radialGradient></defs><rect width="50" height="50" fill="url(#gt)"/><path d="M6 50 Q8 30 18 27 L25 25 L32 27 Q42 30 44 50 Z" fill="#c9d0dc"/><path d="M22.5 27 L27.5 27 L28.5 31 L27 50 L23 50 L21.5 31 Z" fill="#353a52"/><path d="M23 35 L27.5 33 M22.5 41 L27.5 39 M22.5 47 L27.5 45" stroke="#7c8294" stroke-width="1"/><rect x="22" y="20" width="6" height="7" fill="#dba88a"/><ellipse cx="25" cy="15.5" rx="6.3" ry="8.2" fill="#e9b595"/><path d="M18.5 14 Q17.5 4 25 4 Q33 4 31.8 14 Q30.5 9 25.5 8.5 Q20 9 18.5 14 Z" fill="#6b3a1d"/><path d="M21.5 19.5 Q25 22 28.5 19.5" fill="none" stroke="#fff" stroke-width="1.2"/></svg></div>
<div class="t" id="t46" style="left:368.0px;top:1009.2px;font-size:22px;color:#77777c;letter-spacing:0.640px;">Начало</div>
<div class="t" id="t47" style="left:368.0px;top:1036.8px;font-size:27.3px;color:#6f6f74;letter-spacing:0.357px;">29.06.2022</div>
<svg style="position:absolute;left:528.7px;top:1019.7px" width="24" height="32" viewBox="0 0 24 32"><path d="M5.5 5.5 L16.5 16 L5.5 26.5" fill="none" stroke="#afbac3" stroke-width="4.6"/></svg>
<div class="t" id="t48" style="left:571.7px;top:1009.2px;font-size:22px;color:#77777c;letter-spacing:0.600px;">Конец</div>
<div class="t" id="t49" style="left:571.7px;top:1036.8px;font-size:27.3px;color:#6f6f74;letter-spacing:0.291px;">08.09.2022</div>
<div class="t" id="t50" style="left:780.0px;top:1035.5px;font-size:24px;color:#a7b1ba;">1</div>
<svg style="position:absolute;left:800px;top:1035.7px" width="24" height="24" viewBox="0 0 24 24"><g transform="translate(0,0) scale(1.2,1.1) translate(-2,-2)"><path d="M21 6h-2v9H6v2c0 .55.45 1 1 1h11l4 4V7c0-.55-.45-1-1-1zm-4 6V3c0-.55-.45-1-1-1H3c-.55 0-1 .45-1 1v14l4-4h10c.55 0 1-.45 1-1z" fill="#a7b1ba"/></g></svg>
<div class="t" id="t51" style="left:295.0px;top:1085.7px;font-size:28.5px;color:#3d5ce8;letter-spacing:0.699px;">Дела на сегодня</div>
<div style="position:absolute;left:261px;top:1163px;width:598px;height:369px;background:#fff;border:2px solid #e5e8f0;border-radius:14px;box-sizing:border-box"></div>
<div class="t" id="t52" style="left:293.0px;top:1196.1px;font-size:28.5px;color:#2b2b33;letter-spacing:1.160px;-webkit-text-stroke:0.2px #2b2b33;">Модуль интернет-магазин</div>
<div class="t" id="t53" style="left:293.0px;top:1241.2px;font-size:25px;color:#808085;letter-spacing:0.374px;">Проект: Модуль интернет-магазин</div>
<div class="t" id="t54" style="left:294.0px;top:1297.4px;font-size:24.5px;color:#4f60ee;letter-spacing:0.039px;">ООО «Мегастрой»</div>
<div class="t" id="t55" style="left:294.0px;top:1349.0px;font-size:25px;color:#7b8b97;letter-spacing:0.508px;">90,000.00 р.</div>
<div style="position:absolute;left:294px;top:1402px;width:50px;height:50px;border-radius:50%;overflow:hidden"><svg width="50" height="50" viewBox="0 0 50 50"><rect width="50" height="50" fill="#ededef"/><path d="M16 40 Q12 26 19 12 Q24 3 33 5 Q44 9 45 24 Q47 38 40 46 L22 46 Z" fill="#c79c66"/><path d="M22 12 Q28 6 35 10 Q41 16 40 28 Q38 18 33 15 Q27 13 22 12 Z" fill="#e3c190"/><ellipse cx="30.5" cy="21" rx="6.3" ry="8.3" fill="#efbd9c"/><path d="M25 28 L36 28 L36 40 L30 44 L24 40 Z" fill="#ecb696"/><path d="M4 50 Q6 36 16 33 L22 32 L31 46 L38 36 Q44 40 46 50 Z" fill="#4c2630"/><path d="M36 30 Q42 36 40 46 L44 42 Q46 34 42 28 Z" fill="#b8874f"/><path d="M27.5 19.5 H29.5 M32 19.5 H34" stroke="#5a3a2a" stroke-width="1.2"/><path d="M28.5 25 Q30.5 26.5 33 25" fill="none" stroke="#c0606a" stroke-width="1.2"/></svg></div>
<div class="t" id="t56" style="left:368.0px;top:1397.2px;font-size:22px;color:#77777c;letter-spacing:0.640px;">Начало</div>
<div class="t" id="t57" style="left:368.0px;top:1424.9px;font-size:27.3px;color:#6f6f74;letter-spacing:0.265px;">26.05.2022</div>
<svg style="position:absolute;left:528.4px;top:1407.8px" width="24" height="32" viewBox="0 0 24 32"><path d="M5.5 5.5 L16.5 16 L5.5 26.5" fill="none" stroke="#afbac3" stroke-width="4.6"/></svg>
<div class="t" id="t58" style="left:571.4px;top:1397.2px;font-size:22px;color:#77777c;letter-spacing:0.600px;">Конец</div>
<div class="t" id="t59" style="left:570.4px;top:1424.9px;font-size:27.3px;color:#6f6f74;">15.09.2022</div>
<div class="t" id="t60" style="left:780.0px;top:1423.6px;font-size:24px;color:#a7b1ba;">1</div>
<svg style="position:absolute;left:800px;top:1423.8px" width="24" height="24" viewBox="0 0 24 24"><g transform="translate(0,0) scale(1.2,1.1) translate(-2,-2)"><path d="M21 6h-2v9H6v2c0 .55.45 1 1 1h11l4 4V7c0-.55-.45-1-1-1zm-4 6V3c0-.55-.45-1-1-1H3c-.55 0-1 .45-1 1v14l4-4h10c.55 0 1-.45 1-1z" fill="#a7b1ba"/></g></svg>
<div class="t" id="t61" style="left:295.0px;top:1474.3px;font-size:28.5px;color:#f2637b;letter-spacing:0.821px;">Дела просрочены</div>
<div style="position:absolute;left:893px;top:723px;width:566px;height:287px;background:#fff;border:2px solid #e5e8f0;border-radius:14px;box-sizing:border-box"></div>
<div class="t" id="t62" style="left:925.0px;top:755.5px;font-size:28.5px;color:#2b2b33;letter-spacing:0.889px;-webkit-text-stroke:0.2px #2b2b33;">Интернет-магазин на шаблоне</div>
<div class="t" id="t63" style="left:926.0px;top:817.0px;font-size:24.5px;color:#4f60ee;letter-spacing:-0.028px;">ЗАО «Акваланг»</div>
<div class="t" id="t64" style="left:926.0px;top:868.3px;font-size:25px;color:#7b8b97;letter-spacing:0.431px;">80,000.00 р.</div>
<div style="position:absolute;left:926px;top:920px;width:50px;height:50px;border-radius:50%;overflow:hidden"><svg width="50" height="50" viewBox="0 0 50 50"><rect width="50" height="50" fill="#e9d3c4"/><rect x="37" y="0" width="13" height="50" fill="#f3e6d9"/><ellipse cx="25" cy="15" rx="20.5" ry="15" fill="#7a4628"/><ellipse cx="8.5" cy="32" rx="3" ry="4.5" fill="#dfa68c"/><ellipse cx="43" cy="30" rx="3" ry="4.5" fill="#e3ad94"/><ellipse cx="25.5" cy="32" rx="16.5" ry="19.5" fill="#f0c5ac"/><path d="M5 26 Q5 12 16 11 Q28 9.5 37 12 Q43 14 44 24 L46 16 Q44 2 26 2 Q6 2 4.5 20 Z" fill="#7a4628"/><path d="M7.5 22.5 L21.5 20.5 L22.5 29.5 L9.5 31.5 Z" fill="none" stroke="#26201e" stroke-width="2.2" stroke-linejoin="round"/><path d="M25.5 20 L40.5 17.8 L40.5 27 L27 29 Z" fill="none" stroke="#26201e" stroke-width="2.2" stroke-linejoin="round"/><path d="M21.5 21 L25.5 20.2" stroke="#26201e" stroke-width="2.2"/><path d="M23 27 Q24.5 34 22.5 36 Q25.5 37.5 28.5 36" fill="none" stroke="#c38a74" stroke-width="1.3"/><path d="M17.5 38.5 Q25 42.5 32.8 37.6 Q31.5 45 25.5 45.5 Q19.5 45.5 17.5 38.5 Z" fill="#fbf4f0" stroke="#d27c82" stroke-width="1.3"/><path d="M12 50 Q15 47 19 48 L33 48 Q37 47 40 50 Z" fill="#5f6678"/></svg></div>
<div class="t" id="t65" style="left:1000.0px;top:917.1px;font-size:22px;color:#77777c;letter-spacing:0.640px;">Начало</div>
<div class="t" id="t66" style="left:1000.0px;top:942.1px;font-size:27.3px;color:#6f6f74;letter-spacing:0.445px;">30.06.2022</div>
<svg style="position:absolute;left:1161.5px;top:925px" width="24" height="32" viewBox="0 0 24 32"><path d="M5.5 5.5 L16.5 16 L5.5 26.5" fill="none" stroke="#afbac3" stroke-width="4.6"/></svg>
<div class="t" id="t67" style="left:1204.5px;top:917.1px;font-size:22px;color:#77777c;letter-spacing:0.600px;">Конец</div>
<div class="t" id="t68" style="left:1203.5px;top:942.1px;font-size:27.3px;color:#6f6f74;">15.09.2022</div>
<div style="position:absolute;left:893px;top:1029px;width:566px;height:370px;background:#fff;border:2px solid #e5e8f0;border-radius:14px;box-sizing:border-box"></div>
<div class="t" id="t69" style="left:926.0px;top:1062.4px;font-size:28.5px;color:#2b2b33;letter-spacing:0.862px;-webkit-text-stroke:0.2px #2b2b33;">Создание корпоративного сайта</div>
<div class="t" id="t70" style="left:925.0px;top:1107.0px;font-size:25px;color:#808085;letter-spacing:0.299px;">Проект: Создание корпоративного</div>
<div class="t" id="t71" style="left:926.0px;top:1146.3px;font-size:25px;color:#808085;letter-spacing:-0.216px;">сайтаЗАО «Акваланг»</div>
<div class="t" id="t72" style="left:926.0px;top:1203.6px;font-size:24.5px;color:#4f60ee;letter-spacing:-0.028px;">ЗАО «Акваланг»</div>
<div class="t" id="t73" style="left:925.0px;top:1254.1px;font-size:25px;color:#7b8b97;letter-spacing:0.378px;">100,000.00 р.</div>
<div style="position:absolute;left:926px;top:1308px;width:50px;height:50px;border-radius:50%;overflow:hidden"><svg width="50" height="50" viewBox="0 0 50 50"><rect width="50" height="50" fill="#e9d3c4"/><rect x="37" y="0" width="13" height="50" fill="#f3e6d9"/><ellipse cx="25" cy="15" rx="20.5" ry="15" fill="#7a4628"/><ellipse cx="8.5" cy="32" rx="3" ry="4.5" fill="#dfa68c"/><ellipse cx="43" cy="30" rx="3" ry="4.5" fill="#e3ad94"/><ellipse cx="25.5" cy="32" rx="16.5" ry="19.5" fill="#f0c5ac"/><path d="M5 26 Q5 12 16 11 Q28 9.5 37 12 Q43 14 44 24 L46 16 Q44 2 26 2 Q6 2 4.5 20 Z" fill="#7a4628"/><path d="M7.5 22.5 L21.5 20.5 L22.5 29.5 L9.5 31.5 Z" fill="none" stroke="#26201e" stroke-width="2.2" stroke-linejoin="round"/><path d="M25.5 20 L40.5 17.8 L40.5 27 L27 29 Z" fill="none" stroke="#26201e" stroke-width="2.2" stroke-linejoin="round"/><path d="M21.5 21 L25.5 20.2" stroke="#26201e" stroke-width="2.2"/><path d="M23 27 Q24.5 34 22.5 36 Q25.5 37.5 28.5 36" fill="none" stroke="#c38a74" stroke-width="1.3"/><path d="M17.5 38.5 Q25 42.5 32.8 37.6 Q31.5 45 25.5 45.5 Q19.5 45.5 17.5 38.5 Z" fill="#fbf4f0" stroke="#d27c82" stroke-width="1.3"/><path d="M12 50 Q15 47 19 48 L33 48 Q37 47 40 50 Z" fill="#5f6678"/></svg></div>
<div class="t" id="t74" style="left:1000.0px;top:1303.3px;font-size:22px;color:#77777c;letter-spacing:0.640px;">Начало</div>
<div class="t" id="t75" style="left:1000.0px;top:1330.3px;font-size:27.3px;color:#6f6f74;letter-spacing:0.357px;">22.06.2022</div>
<svg style="position:absolute;left:1160.7px;top:1313.2px" width="24" height="32" viewBox="0 0 24 32"><path d="M5.5 5.5 L16.5 16 L5.5 26.5" fill="none" stroke="#afbac3" stroke-width="4.6"/></svg>
<div class="t" id="t76" style="left:1203.7px;top:1303.3px;font-size:22px;color:#77777c;letter-spacing:0.600px;">Конец</div>
<div class="t" id="t77" style="left:1202.7px;top:1330.3px;font-size:27.3px;color:#6f6f74;letter-spacing:0.156px;">12.08.2022</div>
<div style="position:absolute;left:893px;top:1416.5px;width:566px;height:330px;background:#fff;border:2px solid #e5e8f0;border-radius:14px;box-sizing:border-box"></div>
<div class="t" id="t78" style="left:926.0px;top:1450.1px;font-size:28.5px;color:#2b2b33;letter-spacing:0.772px;-webkit-text-stroke:0.2px #2b2b33;">Обновление корпоративного сайта</div>
<div class="t" id="t79" style="left:926.0px;top:1510.6px;font-size:24.5px;color:#4f60ee;letter-spacing:-0.351px;">ООО «Конус»</div>
<div class="t" id="t80" style="left:926.0px;top:1562.2px;font-size:25px;color:#7b8b97;letter-spacing:0.431px;">80,000.00 р.</div>
<div style="position:absolute;left:926px;top:1615px;width:50px;height:50px;border-radius:50%;overflow:hidden"><svg width="50" height="50" viewBox="0 0 50 50"><defs><radialGradient id="gt" cx="50%" cy="45%" r="60%"><stop offset="0" stop-color="#efefef"/><stop offset="0.6" stop-color="#cfcfcf"/><stop offset="1" stop-color="#8e8e8e"/></radialGradient></defs><rect width="50" height="50" fill="url(#gt)"/><path d="M6 50 Q8 30 18 27 L25 25 L32 27 Q42 30 44 50 Z" fill="#c9d0dc"/><path d="M22.5 27 L27.5 27 L28.5 31 L27 50 L23 50 L21.5 31 Z" fill="#353a52"/><path d="M23 35 L27.5 33 M22.5 41 L27.5 39 M22.5 47 L27.5 45" stroke="#7c8294" stroke-width="1"/><rect x="22" y="20" width="6" height="7" fill="#dba88a"/><ellipse cx="25" cy="15.5" rx="6.3" ry="8.2" fill="#e9b595"/><path d="M18.5 14 Q17.5 4 25 4 Q33 4 31.8 14 Q30.5 9 25.5 8.5 Q20 9 18.5 14 Z" fill="#6b3a1d"/><path d="M21.5 19.5 Q25 22 28.5 19.5" fill="none" stroke="#fff" stroke-width="1.2"/></svg></div>
<div class="t" id="t81" style="left:1000.0px;top:1611.0px;font-size:22px;color:#77777c;letter-spacing:0.640px;">Начало</div>
<div class="t" id="t82" style="left:1000.0px;top:1638.1px;font-size:27.3px;color:#6f6f74;">01.07.2022</div>
<svg style="position:absolute;left:1153px;top:1621px" width="24" height="32" viewBox="0 0 24 32"><path d="M5.5 5.5 L16.5 16 L5.5 26.5" fill="none" stroke="#afbac3" stroke-width="4.6"/></svg>
<div class="t" id="t83" style="left:1196.0px;top:1611.0px;font-size:22px;color:#77777c;letter-spacing:0.600px;">Конец</div>
<div class="t" id="t84" style="left:1196.0px;top:1638.1px;font-size:27.3px;color:#6f6f74;">30.09.2022</div>
<div style="position:absolute;left:1493px;top:723px;width:566px;height:287px;background:#fff;border:2px solid #e5e8f0;border-radius:14px;box-sizing:border-box"></div>
<div class="t" id="t85" style="left:1525.0px;top:755.5px;font-size:28.5px;color:#2b2b33;letter-spacing:0.898px;-webkit-text-stroke:0.2px #2b2b33;">Новый дизайн интернет-магазина</div>
<div class="t" id="t86" style="left:1526.0px;top:817.0px;font-size:24.5px;color:#4f60ee;letter-spacing:0.060px;">ООО «Бюро находок»</div>
<div class="t" id="t87" style="left:1525.0px;top:868.3px;font-size:25px;color:#7b8b97;letter-spacing:0.277px;">150,000.00 р.</div>
<div style="position:absolute;left:1526px;top:920px;width:50px;height:50px;border-radius:50%;overflow:hidden"><svg width="50" height="50" viewBox="0 0 50 50"><rect width="50" height="50" fill="#030303"/><path d="M11 36 Q11 22 18 20 L32 20 Q39 22 39 36 Z" fill="#363e62"/><rect x="21.5" y="16" width="7" height="5" fill="#8a6a60"/><ellipse cx="25" cy="13" rx="4.6" ry="6" fill="#a8806c"/><path d="M20.5 11 Q20.5 5 25.5 5 Q30 5.5 29.8 10.5 Q27 8.5 24 9 Q22 9.5 20.5 11 Z" fill="#2a2220"/><path d="M21 12.5 H29.5" stroke="#222" stroke-width="1.4"/><path d="M13.5 27 H37 L37.5 41 H13.5 Z" fill="#cdcdd0"/><rect x="3" y="40" width="44" height="4.5" fill="#dadada"/><path d="M8 36 H13.5 V41 H6 Z" fill="#bdbdbd"/></svg></div>
<div class="t" id="t88" style="left:1600.0px;top:917.1px;font-size:22px;color:#77777c;letter-spacing:0.640px;">Начало</div>
<div class="t" id="t89" style="left:1600.0px;top:942.1px;font-size:27.3px;color:#6f6f74;letter-spacing:-0.201px;">07.06.2022</div>
<svg style="position:absolute;left:1756.2px;top:925px" width="24" height="32" viewBox="0 0 24 32"><path d="M5.5 5.5 L16.5 16 L5.5 26.5" fill="none" stroke="#afbac3" stroke-width="4.6"/></svg>
<div class="t" id="t90" style="left:1799.2px;top:917.1px;font-size:22px;color:#77777c;letter-spacing:0.600px;">Конец</div>
<div class="t" id="t91" style="left:1798.2px;top:942.1px;font-size:27.3px;color:#6f6f74;letter-spacing:-0.466px;">13.07.2022</div>
<div class="t" id="t92" style="left:1980.0px;top:940.8px;font-size:24px;color:#a7b1ba;">1</div>
<svg style="position:absolute;left:2000px;top:941px" width="24" height="24" viewBox="0 0 24 24"><g transform="translate(0,0) scale(1.2,1.1) translate(-2,-2)"><path d="M21 6h-2v9H6v2c0 .55.45 1 1 1h11l4 4V7c0-.55-.45-1-1-1zm-4 6V3c0-.55-.45-1-1-1H3c-.55 0-1 .45-1 1v14l4-4h10c.55 0 1-.45 1-1z" fill="#a7b1ba"/></g></svg>
<div style="position:absolute;left:1493px;top:1029px;width:566px;height:280px;background:#fff;border:2px solid #e5e8f0;border-radius:14px;box-sizing:border-box"></div>
<div class="t" id="t93" style="left:1526.0px;top:1061.8px;font-size:28.5px;color:#2b2b33;letter-spacing:0.780px;-webkit-text-stroke:0.2px #2b2b33;">Заявка на доработку</div>
<div class="t" id="t94" style="left:1526.0px;top:1123.1px;font-size:24.5px;color:#4f60ee;letter-spacing:-0.158px;">ЗАО «Свет»</div>
<div style="position:absolute;left:1526px;top:1178px;width:50px;height:50px;border-radius:50%;overflow:hidden"><svg width="50" height="50" viewBox="0 0 50 50"><rect width="50" height="50" fill="#dac8bd"/><path d="M9 36 Q7 20 14 11 Q21 5 30 6 Q39 9 40 20 Q42 30 38 36 L33 36 L33 20 Q30 12 25 12 Q18 13 17 22 L17 36 Z" fill="#6c4636"/><path d="M33 12 Q40 18 40 30 L36 36 L34 20 Z" fill="#a1877a"/><ellipse cx="25.5" cy="24.5" rx="8.5" ry="11" fill="#d9b19b"/><path d="M17 22 Q17 34 24 36 L24 14 Q18 14 17 22 Z" fill="#b98670" opacity="0.7"/><path d="M20.5 23 H23.5 M27.5 23 H30.5" stroke="#4a3028" stroke-width="1.3"/><path d="M5 50 Q7 39 18 36 L33 36 Q44 39 46 50 Z" fill="#ddd5dc"/></svg></div>
<div class="t" id="t95" style="left:1600.0px;top:1173.3px;font-size:22px;color:#77777c;letter-spacing:0.640px;">Начало</div>
<div class="t" id="t96" style="left:1599.0px;top:1200.1px;font-size:27.3px;color:#6f6f74;">15.06.2022</div>
<svg style="position:absolute;left:1756px;top:1183px" width="24" height="32" viewBox="0 0 24 32"><path d="M5.5 5.5 L16.5 16 L5.5 26.5" fill="none" stroke="#afbac3" stroke-width="4.6"/></svg>
<div class="t" id="t97" style="left:1799.0px;top:1173.3px;font-size:22px;color:#77777c;letter-spacing:0.600px;">Конец</div>
<div class="t" id="t98" style="left:1799.0px;top:1200.1px;font-size:27.3px;color:#6f6f74;">22.09.2022</div>
<div class="t" id="t99" style="left:1980.0px;top:1198.8px;font-size:24px;color:#a7b1ba;">1</div>
<svg style="position:absolute;left:2000px;top:1199px" width="24" height="24" viewBox="0 0 24 24"><g transform="translate(0,0) scale(1.2,1.1) translate(-2,-2)"><path d="M21 6h-2v9H6v2c0 .55.45 1 1 1h11l4 4V7c0-.55-.45-1-1-1zm-4 6V3c0-.55-.45-1-1-1H3c-.55 0-1 .45-1 1v14l4-4h10c.55 0 1-.45 1-1z" fill="#a7b1ba"/></g></svg>
<div class="t" id="t100" style="left:1527.0px;top:1248.8px;font-size:28.5px;color:#3d5ce8;letter-spacing:0.699px;">Дела на сегодня</div>
<div style="position:absolute;left:2093px;top:723px;width:566px;height:272px;background:#fff;border:2px solid #e5e8f0;border-radius:14px;box-sizing:border-box"></div>
<div class="t" id="t101" style="left:2125.0px;top:755.5px;font-size:28.5px;color:#2b2b33;letter-spacing:0.970px;-webkit-text-stroke:0.2px #2b2b33;">Интернет-магазин обновление</div>
<div class="t" id="t102" style="left:2125.0px;top:801.2px;font-size:25px;color:#808085;letter-spacing:0.321px;">Проект: Интернет-магазин обновление</div>
<div class="t" id="t103" style="left:2126.0px;top:852.8px;font-size:25px;color:#7b8b97;letter-spacing:0.550px;">320,000.00 р.</div>
<div style="position:absolute;left:2126px;top:904px;width:50px;height:50px;border-radius:50%;overflow:hidden"><svg width="50" height="50" viewBox="0 0 50 50"><rect width="50" height="50" fill="#030303"/><path d="M11 36 Q11 22 18 20 L32 20 Q39 22 39 36 Z" fill="#363e62"/><rect x="21.5" y="16" width="7" height="5" fill="#8a6a60"/><ellipse cx="25" cy="13" rx="4.6" ry="6" fill="#a8806c"/><path d="M20.5 11 Q20.5 5 25.5 5 Q30 5.5 29.8 10.5 Q27 8.5 24 9 Q22 9.5 20.5 11 Z" fill="#2a2220"/><path d="M21 12.5 H29.5" stroke="#222" stroke-width="1.4"/><path d="M13.5 27 H37 L37.5 41 H13.5 Z" fill="#cdcdd0"/><rect x="3" y="40" width="44" height="4.5" fill="#dadada"/><path d="M8 36 H13.5 V41 H6 Z" fill="#bdbdbd"/></svg></div>
<div class="t" id="t104" style="left:2200.0px;top:901.1px;font-size:22px;color:#77777c;letter-spacing:0.640px;">Начало</div>
<div class="t" id="t105" style="left:2200.0px;top:926.4px;font-size:27.3px;color:#6f6f74;">04.05.2022</div>
<svg style="position:absolute;left:2359px;top:909.3px" width="24" height="32" viewBox="0 0 24 32"><path d="M5.5 5.5 L16.5 16 L5.5 26.5" fill="none" stroke="#afbac3" stroke-width="4.6"/></svg>
<div class="t" id="t106" style="left:2402.0px;top:901.1px;font-size:22px;color:#77777c;letter-spacing:0.600px;">Конец</div>
<div class="t" id="t107" style="left:2402.0px;top:926.4px;font-size:27.3px;color:#6f6f74;">27.07.2022</div>
<div class="t" id="t108" style="left:2580.0px;top:925.1px;font-size:24px;color:#a7b1ba;">1</div>
<svg style="position:absolute;left:2600px;top:925.3px" width="24" height="24" viewBox="0 0 24 24"><g transform="translate(0,0) scale(1.2,1.1) translate(-2,-2)"><path d="M21 6h-2v9H6v2c0 .55.45 1 1 1h11l4 4V7c0-.55-.45-1-1-1zm-4 6V3c0-.55-.45-1-1-1H3c-.55 0-1 .45-1 1v14l4-4h10c.55 0 1-.45 1-1z" fill="#a7b1ba"/></g></svg>
<div style="position:absolute;left:2093px;top:1012.6px;width:566px;height:274px;background:#fff;border:2px solid #e5e8f0;border-radius:14px;box-sizing:border-box"></div>
<div class="t" id="t109" style="left:2126.0px;top:1045.5px;font-size:28.5px;color:#2b2b33;letter-spacing:0.584px;-webkit-text-stroke:0.2px #2b2b33;">Заявка на создание сайта</div>
<div class="t" id="t110" style="left:2125.0px;top:1102.7px;font-size:25px;color:#7b8b97;letter-spacing:0.137px;">110,000.00 р.</div>
<div style="position:absolute;left:2126px;top:1156px;width:50px;height:50px;border-radius:50%;overflow:hidden"><svg width="50" height="50" viewBox="0 0 50 50"><rect width="50" height="50" fill="#161210"/><path d="M0 0 H14 V40 H0 Z" fill="#6e4526"/><path d="M0 6 Q6 2 12 6 V20 H0 Z" fill="#a87648"/><path d="M2 29 H12 V33 H2 Z" fill="#b3844f"/><ellipse cx="26" cy="28" rx="10.5" ry="13.5" fill="#c78b55"/><ellipse cx="15.5" cy="31" rx="3" ry="4.5" fill="#bd7f4a"/><path d="M12 24 Q9 8 24 5 Q38 5 40 18 Q36 14 30 15 Q22 16 18 22 L17 30 Z" fill="#141010"/><path d="M23 26 Q26 24 29 25 M33 25.5 Q35.5 24.5 37.5 26" fill="none" stroke="#2a1a10" stroke-width="1.6"/><path d="M26 38 Q30 39 34 37" fill="none" stroke="#f3e3d3" stroke-width="1.5"/><path d="M18 36 Q20 42 26 42" fill="none" stroke="#5a3a20" stroke-width="1.6" opacity="0.6"/><path d="M2 50 Q4 40 14 38 Q20 44 27 45 Q34 44 38 38 Q46 40 48 50 Z" fill="#eceef3"/></svg></div>
<div class="t" id="t111" style="left:2200.0px;top:1153.3px;font-size:22px;color:#77777c;letter-spacing:0.640px;">Начало</div>
<div class="t" id="t112" style="left:2200.0px;top:1178.7px;font-size:27.3px;color:#6f6f74;">07.04.2022</div>
<svg style="position:absolute;left:2356px;top:1161.6px" width="24" height="32" viewBox="0 0 24 32"><path d="M5.5 5.5 L16.5 16 L5.5 26.5" fill="none" stroke="#afbac3" stroke-width="4.6"/></svg>
<div class="t" id="t113" style="left:2399.0px;top:1153.3px;font-size:22px;color:#77777c;letter-spacing:0.600px;">Конец</div>
<div class="t" id="t114" style="left:2399.0px;top:1178.7px;font-size:27.3px;color:#6f6f74;">05.08.2022</div>
<div class="t" id="t115" style="left:2127.0px;top:1226.9px;font-size:28.5px;color:#3d5ce8;letter-spacing:0.699px;">Дела на сегодня</div>
<div style="position:absolute;left:2093px;top:1305px;width:566px;height:380px;background:#fff;border:2px solid #e5e8f0;border-radius:14px;box-sizing:border-box"></div>
<div class="t" id="t116" style="left:2126.0px;top:1337.1px;font-size:28.5px;color:#2b2b33;letter-spacing:0.714px;-webkit-text-stroke:0.2px #2b2b33;">Заявка на доработку сайта</div>
<div class="t" id="t117" style="left:2125.0px;top:1382.9px;font-size:25px;color:#808085;letter-spacing:0.162px;">Проект: Корпоративный сайт</div>
<div class="t" id="t118" style="left:2126.0px;top:1439.0px;font-size:24.5px;color:#4f60ee;letter-spacing:-0.158px;">ЗАО «Свет»</div>
<div class="t" id="t119" style="left:2125.0px;top:1490.7px;font-size:25px;color:#7b8b97;letter-spacing:0.277px;">150,000.00 р.</div>
<div style="position:absolute;left:2126px;top:1544px;width:50px;height:50px;border-radius:50%;overflow:hidden"><svg width="50" height="50" viewBox="0 0 50 50"><rect width="50" height="50" fill="#ededef"/><path d="M16 40 Q12 26 19 12 Q24 3 33 5 Q44 9 45 24 Q47 38 40 46 L22 46 Z" fill="#c79c66"/><path d="M22 12 Q28 6 35 10 Q41 16 40 28 Q38 18 33 15 Q27 13 22 12 Z" fill="#e3c190"/><ellipse cx="30.5" cy="21" rx="6.3" ry="8.3" fill="#efbd9c"/><path d="M25 28 L36 28 L36 40 L30 44 L24 40 Z" fill="#ecb696"/><path d="M4 50 Q6 36 16 33 L22 32 L31 46 L38 36 Q44 40 46 50 Z" fill="#4c2630"/><path d="M36 30 Q42 36 40 46 L44 42 Q46 34 42 28 Z" fill="#b8874f"/><path d="M27.5 19.5 H29.5 M32 19.5 H34" stroke="#5a3a2a" stroke-width="1.2"/><path d="M28.5 25 Q30.5 26.5 33 25" fill="none" stroke="#c0606a" stroke-width="1.2"/></svg></div>
<div class="t" id="t120" style="left:2200.0px;top:1539.2px;font-size:22px;color:#77777c;letter-spacing:0.640px;">Начало</div>
<div class="t" id="t121" style="left:2199.0px;top:1566.3px;font-size:27.3px;color:#6f6f74;">18.01.2022</div>
<svg style="position:absolute;left:2351px;top:1549.2px" width="24" height="32" viewBox="0 0 24 32"><path d="M5.5 5.5 L16.5 16 L5.5 26.5" fill="none" stroke="#afbac3" stroke-width="4.6"/></svg>
<div class="t" id="t122" style="left:2394.0px;top:1539.2px;font-size:22px;color:#77777c;letter-spacing:0.600px;">Конец</div>
<div class="t" id="t123" style="left:2394.0px;top:1566.3px;font-size:27.3px;color:#6f6f74;">01.06.2022</div>
<div class="t" id="t124" style="left:2581.0px;top:1565.0px;font-size:24px;color:#a7b1ba;">3</div>
<svg style="position:absolute;left:2600px;top:1565.2px" width="24" height="24" viewBox="0 0 24 24"><g transform="translate(0,0) scale(1.2,1.1) translate(-2,-2)"><path d="M21 6h-2v9H6v2c0 .55.45 1 1 1h11l4 4V7c0-.55-.45-1-1-1zm-4 6V3c0-.55-.45-1-1-1H3c-.55 0-1 .45-1 1v14l4-4h10c.55 0 1-.45 1-1z" fill="#a7b1ba"/></g></svg>
<div class="t" id="t125" style="left:2127.0px;top:1616.1px;font-size:28.5px;color:#f2637b;letter-spacing:0.821px;">Дела просрочены</div>
<div style="position:absolute;left:2694px;top:723px;width:566px;height:282px;background:#fff;border:2px solid #e5e8f0;border-radius:14px;box-sizing:border-box"></div>
<div class="t" id="t126" style="left:2727.0px;top:756.1px;font-size:28.5px;color:#2b2b33;letter-spacing:0.355px;-webkit-text-stroke:0.2px #2b2b33;">Отправить логотип и</div>
<div class="t" id="t127" style="left:2726.0px;top:800.1px;font-size:28.5px;color:#2b2b33;letter-spacing:0.355px;-webkit-text-stroke:0.2px #2b2b33;">иллюстрации</div>
<div class="t" id="t128" style="left:2727.0px;top:860.7px;font-size:24.5px;color:#4f60ee;letter-spacing:-0.596px;">ООО «Перспектива»</div>
<div style="position:absolute;left:2727px;top:914px;width:50px;height:50px;border-radius:50%;overflow:hidden"><svg width="50" height="50" viewBox="0 0 50 50"><rect width="50" height="50" fill="#ededef"/><path d="M16 40 Q12 26 19 12 Q24 3 33 5 Q44 9 45 24 Q47 38 40 46 L22 46 Z" fill="#c79c66"/><path d="M22 12 Q28 6 35 10 Q41 16 40 28 Q38 18 33 15 Q27 13 22 12 Z" fill="#e3c190"/><ellipse cx="30.5" cy="21" rx="6.3" ry="8.3" fill="#efbd9c"/><path d="M25 28 L36 28 L36 40 L30 44 L24 40 Z" fill="#ecb696"/><path d="M4 50 Q6 36 16 33 L22 32 L31 46 L38 36 Q44 40 46 50 Z" fill="#4c2630"/><path d="M36 30 Q42 36 40 46 L44 42 Q46 34 42 28 Z" fill="#b8874f"/><path d="M27.5 19.5 H29.5 M32 19.5 H34" stroke="#5a3a2a" stroke-width="1.2"/><path d="M28.5 25 Q30.5 26.5 33 25" fill="none" stroke="#c0606a" stroke-width="1.2"/></svg></div>
<div class="t" id="t129" style="left:2801.0px;top:910.7px;font-size:22px;color:#77777c;letter-spacing:0.640px;">Начало</div>
<div class="t" id="t130" style="left:2801.0px;top:936.4px;font-size:27.3px;color:#6f6f74;">29.01.2022</div>
<svg style="position:absolute;left:2961.5px;top:919.3px" width="24" height="32" viewBox="0 0 24 32"><path d="M5.5 5.5 L16.5 16 L5.5 26.5" fill="none" stroke="#afbac3" stroke-width="4.6"/></svg>
<div class="t" id="t131" style="left:3004.5px;top:910.7px;font-size:22px;color:#77777c;letter-spacing:0.600px;">Конец</div>
<div class="t" id="t132" style="left:3004.5px;top:936.4px;font-size:27.3px;color:#6f6f74;">28.02.2022</div>
<div style="position:absolute;left:2694px;top:1023px;width:566px;height:329px;background:#fff;border:2px solid #e5e8f0;border-radius:14px;box-sizing:border-box"></div>
<div class="t" id="t133" style="left:2726.0px;top:1055.8px;font-size:28.5px;color:#2b2b33;letter-spacing:0.355px;-webkit-text-stroke:0.2px #2b2b33;">Корпоративный сайт</div>
<div class="t" id="t134" style="left:2727.0px;top:1117.1px;font-size:24.5px;color:#4f60ee;letter-spacing:-0.596px;">ООО «Идея Икс»</div>
<div class="t" id="t135" style="left:2727.0px;top:1168.0px;font-size:25px;color:#7b8b97;letter-spacing:0.114px;">350,000.00 р.</div>
<div style="position:absolute;left:2727px;top:1222px;width:50px;height:50px;border-radius:50%;overflow:hidden"><svg width="50" height="50" viewBox="0 0 50 50"><defs><radialGradient id="gt" cx="50%" cy="45%" r="60%"><stop offset="0" stop-color="#efefef"/><stop offset="0.6" stop-color="#cfcfcf"/><stop offset="1" stop-color="#8e8e8e"/></radialGradient></defs><rect width="50" height="50" fill="url(#gt)"/><path d="M6 50 Q8 30 18 27 L25 25 L32 27 Q42 30 44 50 Z" fill="#c9d0dc"/><path d="M22.5 27 L27.5 27 L28.5 31 L27 50 L23 50 L21.5 31 Z" fill="#353a52"/><path d="M23 35 L27.5 33 M22.5 41 L27.5 39 M22.5 47 L27.5 45" stroke="#7c8294" stroke-width="1"/><rect x="22" y="20" width="6" height="7" fill="#dba88a"/><ellipse cx="25" cy="15.5" rx="6.3" ry="8.2" fill="#e9b595"/><path d="M18.5 14 Q17.5 4 25 4 Q33 4 31.8 14 Q30.5 9 25.5 8.5 Q20 9 18.5 14 Z" fill="#6b3a1d"/><path d="M21.5 19.5 Q25 22 28.5 19.5" fill="none" stroke="#fff" stroke-width="1.2"/></svg></div>
<div class="t" id="t136" style="left:2801.0px;top:1217.8px;font-size:22px;color:#77777c;letter-spacing:0.640px;">Начало</div>
<div class="t" id="t137" style="left:2801.0px;top:1244.4px;font-size:27.3px;color:#6f6f74;">06.10.2022</div>
<svg style="position:absolute;left:2961.5px;top:1227.3px" width="24" height="32" viewBox="0 0 24 32"><path d="M5.5 5.5 L16.5 16 L5.5 26.5" fill="none" stroke="#afbac3" stroke-width="4.6"/></svg>
<div class="t" id="t138" style="left:3004.5px;top:1217.8px;font-size:22px;color:#77777c;letter-spacing:0.600px;">Конец</div>
<div class="t" id="t139" style="left:3004.5px;top:1244.4px;font-size:27.3px;color:#6f6f74;">20.12.2022</div>
<div class="t" id="t140" style="left:2728.0px;top:1293.4px;font-size:28.5px;color:#f2637b;letter-spacing:0.821px;">Дела просрочены</div>
<div style="position:absolute;left:2826px;top:796px;width:48px;height:48px;border-radius:50%;background:rgba(120,120,120,0.62)"></div>
<svg style="position:absolute;left:2836px;top:806px" width="28" height="28" viewBox="0 0 28 28"><path d="M10.5 19.5 L16.5 13.5" stroke="rgba(235,235,235,0.7)" stroke-width="3.5" stroke-linecap="round"/></svg>
<div style="position:absolute;left:2920px;top:0;width:120px;height:1660px;background:#000"></div>
<div style="position:absolute;left:0;top:1630px;width:3040px;height:30px;background:#000"></div>
<div style="position:absolute;left:0;top:0;width:120px;height:1660px;background:#000"></div>
<div style="position:absolute;left:0;top:0;width:3040px;height:30px;background:#000"></div>
<svg style="position:absolute;left:120px;top:30px;transform:rotate(0deg)" width="8" height="8" viewBox="0 0 8 8"><path d="M0 0 H8 A8 8 0 0 0 0 8 Z" fill="#000"/></svg>
<svg style="position:absolute;left:2912px;top:30px;transform:rotate(90deg)" width="8" height="8" viewBox="0 0 8 8"><path d="M0 0 H8 A8 8 0 0 0 0 8 Z" fill="#000"/></svg>
<svg style="position:absolute;left:2912px;top:1622px;transform:rotate(180deg)" width="8" height="8" viewBox="0 0 8 8"><path d="M0 0 H8 A8 8 0 0 0 0 8 Z" fill="#000"/></svg>
<svg style="position:absolute;left:120px;top:1622px;transform:rotate(270deg)" width="8" height="8" viewBox="0 0 8 8"><path d="M0 0 H8 A8 8 0 0 0 0 8 Z" fill="#000"/></svg>
</body></html>
